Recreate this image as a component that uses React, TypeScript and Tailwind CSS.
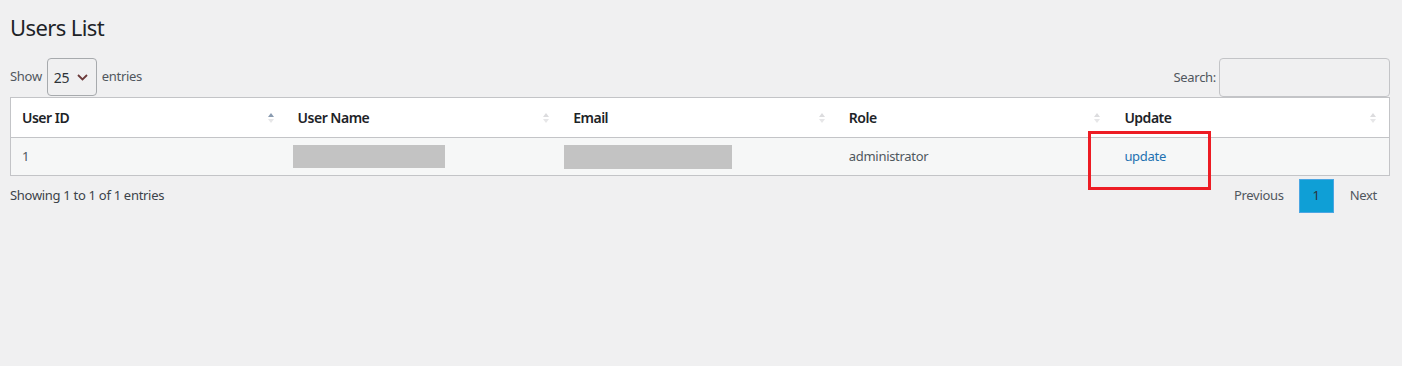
import React from 'react';

// ---------------------------------------------------------------------------
// Data
// ---------------------------------------------------------------------------

const COLUMNS = ['User ID', 'User Name', 'Email', 'Role', 'Update'];

// ---------------------------------------------------------------------------
// Helper components
// ---------------------------------------------------------------------------

function SortIcon({ active = false }: { active?: boolean }) {
  return (
    <svg width="6" height="14" viewBox="0 0 6 14" className="shrink-0">
      <path d="M3 2 L6 6 L0 6 Z" fill={active ? '#8a9bb0' : '#dcdcde'} />
      <path d="M3 12 L6 8 L0 8 Z" fill="#e6e6e8" />
    </svg>
  );
}

function Redacted({ w, h }: { w: number; h: number }) {
  return <div className="bg-[#c3c3c3]" style={{ width: w, height: h }} />;
}

// ---------------------------------------------------------------------------
// Component
// ---------------------------------------------------------------------------

export default function App() {
  return (
    <div className="relative min-h-[366px] bg-[#f0f0f1] pl-[10px] pr-[12px] font-['Noto_Sans',sans-serif] text-[13px] tracking-[-0.3px] text-[#50575e]">
      <h1 className="pt-[12px] pb-[4px] text-[22px] leading-[30px] font-normal tracking-[-0.6px] text-[#1d2327]">
        Users List
      </h1>

      {/* ── Controls ─────────────────────────────────────────────── */}
      <div className="mt-[12px] flex items-start justify-between">
        <div className="flex h-[38px] items-center gap-[5px]">
          <span>Show</span>
          <div className="flex h-[38px] w-[50px] items-center justify-between rounded-[4px] border border-[#a7aaad] pl-[6px] pr-[8px] text-[14px] text-[#2c3338]">
            <span>25</span>
            <svg width="11" height="7" viewBox="0 0 11 7">
              <path d="M1 1 L5.5 5.5 L10 1" fill="none" stroke="#6b3a3a" strokeWidth="1.8" />
            </svg>
          </div>
          <span>entries</span>
        </div>
        <div className="flex h-[39px] items-center gap-[3px]">
          <span>Search:</span>
          <div className="h-[39px] w-[171px] rounded-[4px] border border-[#c3c4c7]" />
        </div>
      </div>

      {/* ── Table ────────────────────────────────────────────────── */}
      <div className="border border-[#c3c4c7]">
        <div className="grid h-[40px] grid-cols-5 border-b border-[#c3c4c7] bg-white">
          {COLUMNS.map((col, i) => (
            <div key={col} className="flex items-center justify-between pl-[11px] pr-[13px]">
              <span className="text-[14px] font-semibold tracking-[-0.5px] text-[#1d2327]">{col}</span>
              <SortIcon active={i === 0} />
            </div>
          ))}
        </div>
        <div className="grid h-[37px] grid-cols-5 items-center bg-[#f6f7f7]">
          <div className="pl-[11px]">1</div>
          <div className="pl-[6px]">
            <Redacted w={152} h={23} />
          </div>
          <div className="pl-[2px]">
            <Redacted w={168} h={24} />
          </div>
          <div className="pl-[11px]">administrator</div>
          <div className="pl-[11px]">
            <span className="text-[#2271b1]">update</span>
          </div>
        </div>
      </div>

      {/* ── Footer ───────────────────────────────────────────────── */}
      <div className="mt-[3px] flex items-center justify-between">
        <span className="text-[#3c434a]">Showing 1 to 1 of 1 entries</span>
        <div className="flex items-center">
          <span className="px-[15px]">Previous</span>
          <span className="flex h-[34px] w-[35px] items-center justify-center border border-[#4ba6e3] bg-[#0f9fd6] text-[#2c3338]">
            1
          </span>
          <span className="pl-[16px] pr-[13px]">Next</span>
        </div>
      </div>

      {/* Highlight box over the update cell */}
      <div className="absolute left-[1088px] top-[131px] h-[59px] w-[123px] border-[3px] border-[#ed1c24]" />
    </div>
  );
}
